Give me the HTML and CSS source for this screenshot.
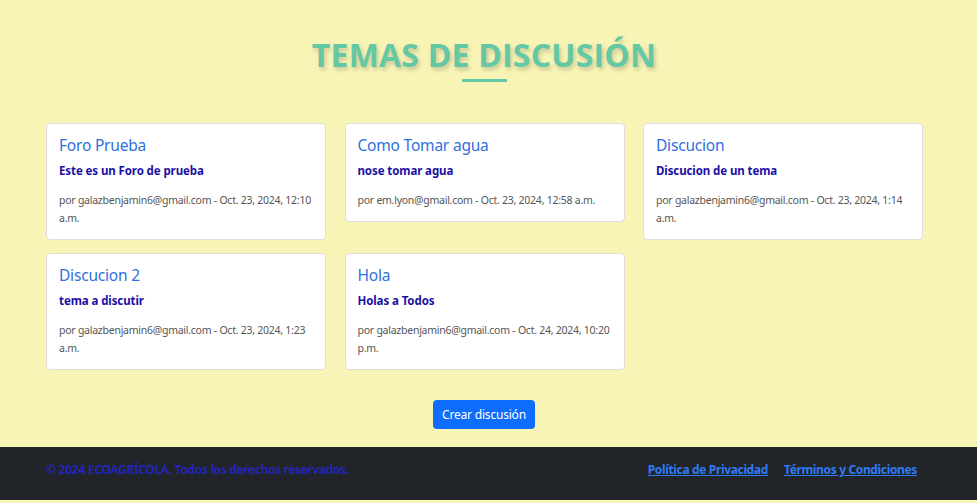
FILE: index.html
```html
<!DOCTYPE html>
<html lang="es">
<head>
<meta charset="utf-8">
<title>Temas de discusión</title>
<link rel="stylesheet" href="styles.css">
</head>
<body>
<main class="page">
  <header class="heading">
    <h1 class="heading-title">TEMAS DE DISCUSIÓN</h1>
    <div class="heading-line"></div>
  </header>
  <section class="grid">
    <article class="card">
      <h2 class="card-title">Foro Prueba</h2>
      <p class="card-sub">Este es un Foro de prueba</p>
      <p class="card-meta">por galazbenjamin6@gmail.com - Oct. 23, 2024, 12:10 a.m.</p>
    </article>
    <article class="card">
      <h2 class="card-title">Como Tomar agua</h2>
      <p class="card-sub">nose tomar agua</p>
      <p class="card-meta">por em.lyon@gmail.com - Oct. 23, 2024, 12:58 a.m.</p>
    </article>
    <article class="card">
      <h2 class="card-title">Discucion</h2>
      <p class="card-sub">Discucion de un tema</p>
      <p class="card-meta">por galazbenjamin6@gmail.com - Oct. 23, 2024, 1:14 a.m.</p>
    </article>
    <article class="card">
      <h2 class="card-title">Discucion 2</h2>
      <p class="card-sub">tema a discutir</p>
      <p class="card-meta">por galazbenjamin6@gmail.com - Oct. 23, 2024, 1:23 a.m.</p>
    </article>
    <article class="card">
      <h2 class="card-title">Hola</h2>
      <p class="card-sub">Holas a Todos</p>
      <p class="card-meta">por galazbenjamin6@gmail.com - Oct. 24, 2024, 10:20 p.m.</p>
    </article>
  </section>
  <div class="actions">
    <a class="btn" href="#">Crear discusión</a>
  </div>
</main>
<footer class="footer">
  <p class="footer-copy">© 2024 ECOAGRÍCOLA. Todos los derechos reservados.</p>
  <nav class="footer-links">
    <a href="#">Política de Privacidad</a>
    <a href="#">Términos y Condiciones</a>
  </nav>
</footer>
</body>
</html>
```
FILE: styles.css
```css
* { box-sizing: border-box; }
html, body { margin: 0; padding: 0; }
body {
  background: #f7f4b5;
  font-family: "Noto Sans", "Open Sans", sans-serif;
  color: #212529;
  height: 503px;
  overflow: hidden;
}
.page {
  padding: 0 55px 0 46px;
}
.heading {
  display: flex;
  flex-direction: column;
  align-items: center;
  padding-top: 32px;
}
.heading-title {
  margin: 0;
  font-family: "Open Sans", sans-serif;
  font-weight: 700;
  font-size: 32px;
  line-height: 46px;
  letter-spacing: 0.2px;
  color: #64c8a5;
  text-shadow: 2px 3px 4px rgba(0,0,0,0.18);
}
.heading-line {
  width: 45px;
  height: 3px;
  background: #64c8a5;
  margin-top: 1px;
}
.grid {
  display: grid;
  grid-template-columns: repeat(3, 280px);
  column-gap: 18.5px;
  row-gap: 13px;
  align-items: start;
  margin-top: 41px;
}
.card {
  background: #fff;
  border: 1px solid #dedede;
  border-radius: 4px;
  padding: 12px 12px 12px 12px;
}
.card-title {
  margin: 0;
  font-size: 15.5px;
  line-height: 19px;
  font-weight: 400;
  letter-spacing: -0.2px;
  color: #2f6fdc;
}
.card-sub {
  margin: 8px 0 0;
  font-size: 11.5px;
  line-height: 16px;
  font-weight: 700;
  letter-spacing: -0.1px;
  color: #1c0fa6;
}
.card-meta {
  margin: 12px 0 0;
  font-size: 10.5px;
  line-height: 18px;
  letter-spacing: -0.25px;
  color: #555;
}
.actions {
  display: flex;
  justify-content: center;
  margin-top: 30px;
}
.btn {
  display: inline-block;
  background: #0d6efd;
  color: #fff;
  text-decoration: none;
  font-size: 12px;
  line-height: 29px;
  height: 29px;
  padding: 0 9px;
  letter-spacing: -0.2px;
  border-radius: 4px;
}
.footer {
  margin-top: 18px;
  height: 53px;
  background: #212529;
  display: flex;
  align-items: center;
  justify-content: space-between;
  padding: 0 60px 8px 46px;
  font-size: 12px;
}
.footer-copy {
  margin: 0;
  color: #2424c8;
  font-weight: 600;
  letter-spacing: -0.25px;
}
.footer-links {
  display: flex;
  gap: 16px;
}
.footer-links a {
  color: #2f7bf5;
  font-weight: 700;
  letter-spacing: -0.35px;
  text-decoration: underline;
}
```
